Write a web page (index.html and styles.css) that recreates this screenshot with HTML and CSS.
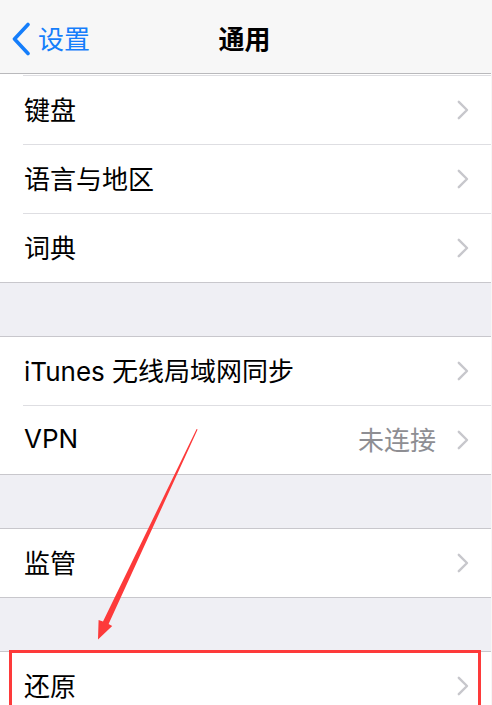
FILE: index.html
```html
<!DOCTYPE html>
<html lang="zh-CN">
<head>
<meta charset="utf-8">
<title>通用</title>
<link rel="stylesheet" href="styles.css">
</head>
<body>
<div class="screen">
  <header class="nav">
    <div class="back">
      <svg class="back-chevron" width="22" height="34" viewBox="0 0 22 34"><path d="M17 2.5 L3.5 17 L17 31.5" fill="none" stroke="#157efb" stroke-width="3.6" stroke-linecap="round" stroke-linejoin="round"/></svg>
      <span class="back-label">设置</span>
    </div>
    <div class="title">通用</div>
  </header>

  <div class="list">
    <div class="stub"></div>
    <section class="group first">
      <div class="row"><span class="label">键盘</span><svg class="chev" width="12" height="20" viewBox="0 0 12 20"><path d="M1.8 1.8 L10 10 L1.8 18.2" fill="none" stroke="#c7c7cc" stroke-width="2.4" stroke-linecap="round" stroke-linejoin="round"/></svg></div>
      <div class="row"><span class="label">语言与地区</span><svg class="chev" width="12" height="20" viewBox="0 0 12 20"><path d="M1.8 1.8 L10 10 L1.8 18.2" fill="none" stroke="#c7c7cc" stroke-width="2.4" stroke-linecap="round" stroke-linejoin="round"/></svg></div>
      <div class="row"><span class="label">词典</span><svg class="chev" width="12" height="20" viewBox="0 0 12 20"><path d="M1.8 1.8 L10 10 L1.8 18.2" fill="none" stroke="#c7c7cc" stroke-width="2.4" stroke-linecap="round" stroke-linejoin="round"/></svg></div>
    </section>
    <div class="gap"></div>
    <section class="group">
      <div class="row"><span class="label">iTunes 无线局域网同步</span><svg class="chev" width="12" height="20" viewBox="0 0 12 20"><path d="M1.8 1.8 L10 10 L1.8 18.2" fill="none" stroke="#c7c7cc" stroke-width="2.4" stroke-linecap="round" stroke-linejoin="round"/></svg></div>
      <div class="row"><span class="label">VPN</span><span class="value">未连接</span><svg class="chev" width="12" height="20" viewBox="0 0 12 20"><path d="M1.8 1.8 L10 10 L1.8 18.2" fill="none" stroke="#c7c7cc" stroke-width="2.4" stroke-linecap="round" stroke-linejoin="round"/></svg></div>
    </section>
    <div class="gap"></div>
    <section class="group">
      <div class="row"><span class="label">监管</span><svg class="chev" width="12" height="20" viewBox="0 0 12 20"><path d="M1.8 1.8 L10 10 L1.8 18.2" fill="none" stroke="#c7c7cc" stroke-width="2.4" stroke-linecap="round" stroke-linejoin="round"/></svg></div>
    </section>
    <div class="gap"></div>
    <section class="group">
      <div class="row"><span class="label">还原</span><svg class="chev" width="12" height="20" viewBox="0 0 12 20"><path d="M1.8 1.8 L10 10 L1.8 18.2" fill="none" stroke="#c7c7cc" stroke-width="2.4" stroke-linecap="round" stroke-linejoin="round"/></svg></div>
    </section>
  </div>

  <div class="highlight"></div>
  <svg class="arrow" width="492" height="705" viewBox="0 0 492 705">
    <polygon points="196.6,429 197.6,429.6 108.6,624 112.2,626 98,639.5 98.6,620 103,621.6" fill="#fd3a3a"/>
  </svg>
</div>
</body>
</html>
```

FILE: styles.css
```css
html {
  background: #f6f6f6;
}
body {
  margin: 0;
  font-family: Inter, "Noto Sans CJK SC", sans-serif;
  -webkit-font-smoothing: antialiased;
}
.screen {
  position: relative;
  width: 491px;
  height: 705px;
  overflow: hidden;
  background: #efeff4;
}
.nav {
  position: relative;
  height: 73px;
  background: #f7f7f7;
  border-bottom: 1px solid #b9b9bc;
  display: flex;
  align-items: center;
  justify-content: center;
}
.back {
  position: absolute;
  left: 11px;
  top: 0;
  height: 73px;
  display: flex;
  align-items: center;
  gap: 5px;
}
.back-chevron {
  display: block;
  margin-top: 5px;
}
.back-label {
  font-size: 26px;
  color: #157efb;
  margin-top: 1px;
}
.title {
  font-size: 26px;
  font-weight: 600;
  color: #000;
  margin-left: -2px;
  margin-top: 1px;
}
.list {
  display: flex;
  flex-direction: column;
}
.stub {
  position: relative;
  height: 1px;
  background: #fff;
  border-bottom: 1px solid #dedee2;
}
.stub::before {
  content: "";
  position: absolute;
  left: 0;
  bottom: -1px;
  width: 23px;
  height: 1px;
  background: #fff;
}
.group {
  background: #fff;
  border-top: 1px solid #c8c7cc;
  border-bottom: 1px solid #c8c7cc;
}
.group.first {
  border-top: none;
}
.gap {
  height: 53px;
}
.row {
  position: relative;
  box-sizing: border-box;
  height: 68px;
  display: flex;
  align-items: center;
  padding: 0 22px 4px 24px;
}
.row + .row::before {
  content: "";
  position: absolute;
  left: 23px;
  right: 0;
  top: -1px;
  height: 1px;
  background: #dedee2;
}
.row + .row {
  margin-top: 1px;
}
.label {
  font-size: 26px;
  color: #000;
  flex: 1;
  white-space: nowrap;
}
.value {
  font-size: 26px;
  color: #8e8e93;
  margin-right: 21px;
}
.chev {
  display: block;
  margin-top: 4px;
}
.highlight {
  position: absolute;
  left: 9px;
  top: 650px;
  width: 466px;
  height: 80px;
  border: 3px solid #fd3a3a;
}
.arrow {
  position: absolute;
  left: 0;
  top: 0;
  pointer-events: none;
}
```
